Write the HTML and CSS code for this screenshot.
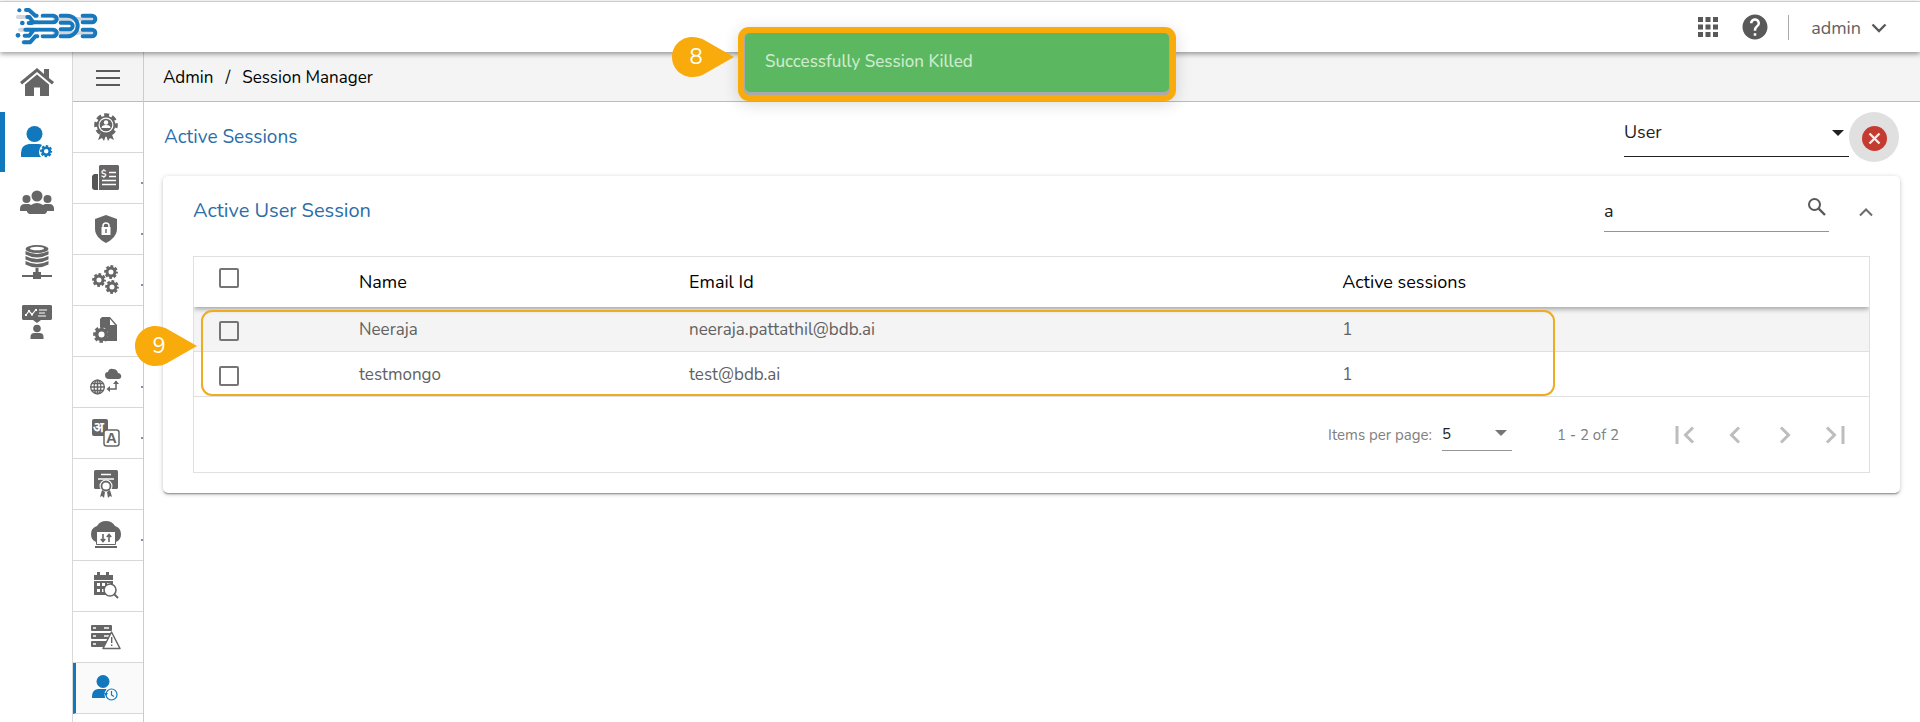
FILE: index.html
```html
<!DOCTYPE html>
<html lang="en">
<head>
    <meta charset="UTF-8">
    <meta name="viewport" content="width=device-width, initial-scale=1.0">
    <title>Session Manager</title>
    <link rel="stylesheet" href="styles.css">
</head>
<body>
    <!-- shared shapes -->
    <svg class="defs" aria-hidden="true">
        <symbol id="gear" viewBox="0 0 24 24">
            <circle cx="12" cy="12" r="6.800" fill="none" stroke="currentColor" stroke-width="5"/>
            <circle cx="12" cy="12" r="10" fill="none" stroke="currentColor" stroke-width="3.6" stroke-dasharray="4.850 3" stroke-dashoffset="2.1"/>
        </symbol>
        <symbol id="pin" viewBox="0 0 62 40">
            <path d="M20 0C9 0 0 9 0 20s9 20 20 20c5 0 9-1 14-4l28-16L34 4C29 1 25 0 20 0z" fill="#f9ab0c"/>
        </symbol>
    </svg>

    <header class="topbar">
        <a class="logo" href="#" aria-label="BDB">
            <svg width="96" height="48" viewBox="0 0 288 144" fill="none" stroke-linecap="round" stroke-linejoin="round">
                <path d="M90 48H250M90 89H250M24 42H50M30 80H60M40 118H56" stroke="#d3d6dc" stroke-width="12"/>
                <g stroke="#1778be" stroke-width="12">
                    <path d="M48 21H57L76 38H80M52 42H58L70 58H130a10 10 0 0 0 0-20H98"/>
                    <path d="M56 60H66M46 80H130a10 10 0 0 1 0 20H98M70 82L58 98H44M82 100H76L60 118H42"/>
                    <path d="M152 38H172a31 31 0 0 1 0 62H152M152 59H178a10 10 0 0 1 0 20H152"/>
                    <path d="M218 38H246a10 10 0 0 1 0 20H218M218 80H246a10 10 0 0 1 0 20H218"/>
                </g>
                <path d="M84 48H128M84 90H128M90 69H134" stroke="#fff" stroke-width="7" stroke-linecap="butt"/>
                <g fill="#1778be"><circle cx="28" cy="22" r="6"/><circle cx="37" cy="60" r="7"/><circle cx="24" cy="97" r="7"/></g>
            </svg>
        </a>
        <div class="top-actions">
            <button class="plain" aria-label="Apps">
                <svg width="20" height="20" viewBox="0 0 20 20" fill="#595959"><path d="M0 0h5v5H0zM7.500 0h5v5h-5zM15 0h5v5h-5zM0 7.500h5v5H0zM7.500 7.500h5v5h-5zM15 7.500h5v5h-5zM0 15h5v5H0zM7.500 15h5v5h-5zM15 15h5v5h-5z"/></svg>
            </button>
            <button class="plain help" aria-label="Help">
                <svg width="30" height="30" viewBox="0 0 24 24" fill="#595959"><path d="M12 2C6.480 2 2 6.480 2 12s4.480 10 10 10 10-4.480 10-10S17.520 2 12 2zm1 17h-2v-2h2v2zm2.070-7.750l-.9.920C13.450 12.900 13 13.500 13 15h-2v-.5c0-1.100.45-2.100 1.170-2.830l1.240-1.260c.37-.36.59-.86.59-1.410 0-1.100-.9-2-2-2s-2 .9-2 2H8c0-2.210 1.790-4 4-4s4 1.790 4 4c0 .88-.36 1.680-.93 2.250z"/></svg>
            </button>
            <button class="plain account">admin
                <svg width="16" height="10" viewBox="0 0 16 10" fill="none" stroke="#595959" stroke-width="2.400"><path d="M1.500 1.500L8 8l6.500-6.500"/></svg>
            </button>
        </div>
    </header>

    <div class="shell">
        <nav class="rail" aria-label="Modules">
            <a href="#" aria-label="Home"><svg width="34" height="28" viewBox="0 0 34 28" fill="#666"><path d="M17 0L0 14l2 2.500L17 4l15 12.500 2-2.500-5-4V1h-5v5z"/><path d="M17 6.500L5 16.500V28h9v-8.500h6V28h9V16.500z"/></svg></a>
            <a href="#" class="active" aria-label="Admin"><svg width="32" height="32" viewBox="0 0 32 32" fill="#1178be" color="#1178be"><circle cx="13.500" cy="8" r="8"/><path d="M0 31v-4q0-8 8-9h9q3 0 4 1-3 3-3 7 0 3 2 5z"/><use href="#gear" x="19" y="19" width="12.500" height="12.500"/></svg></a>
            <a href="#" aria-label="Groups"><svg width="34" height="24" viewBox="0 0 34 24" fill="#666"><circle cx="17" cy="6" r="5.500"/><circle cx="6.500" cy="9" r="4"/><circle cx="27.500" cy="9" r="4"/><path d="M0 21v-2q0-5 5-5h4l2 1q3-2 6-2t6 2l2-1h4q5 0 5 5v2h-7v1l-2 2H9l-2-2v-1z"/></svg></a>
            <a href="#" aria-label="Data sources"><svg width="30" height="34" viewBox="0 0 30 34" fill="#666"><ellipse cx="15" cy="4" rx="11.500" ry="4"/><ellipse cx="15" cy="3.500" rx="7" ry="1.800" fill="#fff"/><path d="M3.500 6q11.500 6 23 0v3.500q-11.500 6-23 0zM3.500 11q11.500 6 23 0v3.500q-11.500 6-23 0zM3.500 16q11.500 6 23 0v3.500q-11.500 6-23 0zM13.500 23h3v4h2.500v3h11v2H19v2h-8v-2H0v-2h11v-3h2.500z"/></svg></a>
            <a href="#" aria-label="Training"><svg width="30" height="34" viewBox="0 0 30 34" fill="#666"><path d="M1 0h28l1 1v13l-1 1H19l-4 3-4-3H1l-1-1V1z"/><path d="M4 10l3-4 3 3.500 4-5M17 5h8M17 8h6M16 11h8" fill="none" stroke="#fff" stroke-width="1.200"/><path d="M3 9h2v2H3zM6 5h2v2H6zM9 8.500h2v2H9zM13 4h2v2h-2z" fill="#fff"/><circle cx="15" cy="23.500" r="3.800"/><path d="M8.500 34v-2q0-4 4-4h5q4 0 4 4v2z"/></svg></a>
        </nav>

        <nav class="subrail" aria-label="Admin">
            <button class="plain burger" aria-label="Menu"><svg width="24" height="16" viewBox="0 0 24 16" stroke="#595959" stroke-width="2"><path d="M0 1h24M0 8h24M0 15h24"/></svg></button>
            <a href="#" aria-label="Badges"><svg width="28" height="28" viewBox="0 0 28 28" fill="#666" color="#666"><path d="M9 19h4l1 3-2 6-2-3-4 2zM19 19h-4l-1 3 2 6 2-3 4 2z"/><use href="#gear" x="2" y="0" width="24" height="24"/><circle cx="14" cy="12" r="7.500" fill="#fff"/><circle cx="14" cy="12" r="6.300"/><circle cx="14" cy="9.500" r="2.200" fill="#fff"/><path d="M9.500 15q0-3 4.500-3t4.500 3z" fill="#fff"/></svg></a>
            <a href="#" class="more" aria-label="Billing"><svg width="28" height="26" viewBox="0 0 28 26" fill="#666"><path d="M7 1l1-1h18l1 1v23l-1 1H7z"/><path d="M6 9v16H3q-3 0-3-3V11l2-2z" fill="#555"/><path d="M17 7.500h7M17 11.500h7M10 15.500h14M10 19.500h14" stroke="#fff" stroke-width="1.400"/><text x="9" y="12" class="tiny">$</text></svg></a>
            <a href="#" class="more" aria-label="Security"><svg width="24" height="28" viewBox="0 0 24 28" fill="#666"><path d="M12 0l11 4v10c0 6-5 11-11 14C6 25 1 20 1 14V4z"/><path d="M9 13v-2q0-3 3-3t3 3v2" fill="none" stroke="#fff" stroke-width="1.500"/><rect x="7.500" y="12" width="9" height="8" fill="#fff"/><path d="M11.300 14h1.400v4h-1.400z"/></svg></a>
            <a href="#" class="more" aria-label="Configurations"><svg width="28" height="30" viewBox="0 0 28 30" color="#666"><use href="#gear" x="0" y="8" width="14" height="14"/><use href="#gear" x="12" y="0" width="14" height="14"/><use href="#gear" x="13" y="15" width="14" height="14"/></svg></a>
            <a href="#" aria-label="File settings"><svg width="28" height="28" viewBox="0 0 28 28" fill="#666" color="#666"><path d="M8 2l2-2h8l7 8v16H8z"/><path d="M18 2v6h5z" fill="#fff"/><circle cx="9" cy="17" r="7" fill="#fff"/><use href="#gear" x="1" y="9" width="17" height="17"/></svg></a>
            <a href="#" class="more" aria-label="Cloud sync"><svg width="32" height="28" viewBox="0 0 32 28" fill="#666"><path d="M19 11h10q3-1 2-4-1-2-3-2-1-4-5-4-4-1-5 3-3 0-3 3 0 4 4 4z"/><g fill="none" stroke="#666" stroke-width="1.300"><circle cx="7.500" cy="19" r="6.800"/><ellipse cx="7.500" cy="19" rx="3.400" ry="6.800"/><path d="M7.500 12v14M0 19h15M1.500 15.500h12M1.500 22.500h12M26 13v8h-8" stroke-width="1.500"/></g><path d="M23 16l3-3.500 3 3.500zM20 18l-3.500 3 3.500 3z"/></svg></a>
            <a href="#" class="more" aria-label="Languages"><svg width="28" height="28" viewBox="0 0 28 28" fill="#666"><rect x="0" y="0" width="16" height="17" rx="2"/><text x="1" y="13" class="hindi">अ</text><rect x="12" y="11" width="15" height="16" rx="2.500" fill="#fff" stroke="#666" stroke-width="1.500"/><text x="14" y="24" class="letter">A</text></svg></a>
            <a href="#" aria-label="Certificates"><svg width="26" height="28" viewBox="0 0 26 28" fill="#666"><rect x="1" y="0" width="24" height="19" rx="1.500"/><path d="M8 4.500h10M5 9h16" stroke="#fff" stroke-width="1.500"/><circle cx="13" cy="16" r="6.500" fill="#fff"/><circle cx="13" cy="16" r="4.500" fill="none" stroke="#666" stroke-width="1.800"/><path d="M9 20l3 2-1 6-2-2-2 1zM17 20l-3 2 1 6 2-2 2 1z"/></svg></a>
            <a href="#" class="more" aria-label="Cloud migration"><svg width="30" height="28" viewBox="0 0 30 28" fill="#666"><path d="M5 21q-5-2-5-8 0-6 6-8Q9 0 15 0t9 5q6 2 6 8t-5 8z"/><path d="M5.500 10.500h19v13h-19z" fill="#fff" stroke="#666"/><path d="M4 25h22v2H4z"/><path d="M12 13v7M9.800 18l2.200 2.500 2.200-2.500M18 21v-7M15.800 16l2.200-2.500 2.200 2.500" fill="none" stroke="#666" stroke-width="1.600"/></svg></a>
            <a href="#" aria-label="Schedules"><svg width="26" height="28" viewBox="0 0 26 28" fill="#666"><path d="M4 0h3v3h6V0h3v3h4v5H1V3h3zM1 9h19v14H1z"/><path d="M4 11h3v3H4zM9 11h3v3H9zM14 11h3v3h-3zM4 17h3v3H4zM9 17h3v3H9z" fill="#fff"/><circle cx="17" cy="18" r="6" fill="#fff" stroke="#666" stroke-width="1.600"/><path d="M21 22l4 4" stroke="#666" stroke-width="2"/></svg></a>
            <a href="#" aria-label="Server alerts"><svg width="30" height="26" viewBox="0 0 30 26" fill="#666"><rect y="1" width="21" height="6" rx="1"/><rect y="9" width="21" height="6" rx="1"/><rect y="17" width="21" height="6" rx="1"/><path d="M2 4h3M2 12h3M2 20h3M13 4h5M13 12h5" stroke="#fff" stroke-width="1.300"/><path d="M20.500 8L29 24.500H12z" fill="#fff" stroke="#666" stroke-width="1.500" stroke-linejoin="round"/><path d="M20 13h1.400v6H20zM20 20.500h1.400V22H20z"/></svg></a>
            <a href="#" class="active" aria-label="Session Manager"><svg width="26" height="26" viewBox="0 0 26 26" fill="#1178be"><circle cx="11" cy="6.500" r="6.500"/><path d="M0 23v-2q0-6 6-7h8l1 1q-2 2-2 5v3z"/><circle cx="19.500" cy="19.500" r="7" fill="#fafafa"/><circle cx="19.500" cy="19.500" r="5.500" fill="none" stroke="#1178be" stroke-width="1.200"/><path d="M19.500 16v4l2.500 1.500" fill="none" stroke="#1178be" stroke-width="1.200"/><path d="M12 18h4l-2 3z"/></svg></a>
        </nav>

        <main class="content">
            <div class="crumbs">
                <a href="#">Admin</a><span>/</span><span>Session Manager</span>
            </div>

            <div class="page-head">
                <h1>Active Sessions</h1>
                <div class="filter">
                    <div class="select-box type-select">
                        <select aria-label="Session type"><option>User</option><option>API Client</option></select>
                    </div>
                    <button class="plain kill" aria-label="Kill sessions">
                        <svg width="25" height="25" viewBox="0 0 25 25"><circle cx="12.500" cy="12.500" r="12.500" fill="#c43c31"/><path d="M7.500 7.500l10 10M17.500 7.500l-10 10" stroke="#eee" stroke-width="2.400"/></svg>
                    </button>
                </div>
            </div>

            <section class="card">
                <div class="card-head">
                    <h2>Active User Session</h2>
                    <div class="card-tools">
                        <label class="search">
                            <input type="text" value="a" aria-label="Search">
                            <svg width="18" height="18" viewBox="0 0 18 18" fill="none" stroke="#595959" stroke-width="2"><circle cx="6.500" cy="6.500" r="5.500"/><path d="M10.700 10.700l6.300 6.300" stroke-width="2.400"/></svg>
                        </label>
                        <button class="plain collapse" aria-label="Collapse">
                            <svg width="14" height="10" viewBox="0 0 14 10" fill="none" stroke="#6b6b6b" stroke-width="2"><path d="M1 8.500l6-6 6 6"/></svg>
                        </button>
                    </div>
                </div>

                <div class="table-box">
                    <table>
                        <thead>
                            <tr><th class="check"><input type="checkbox" aria-label="Select all"></th><th class="name">Name</th><th class="email">Email Id</th><th>Active sessions</th></tr>
                        </thead>
                        <tbody>
                            <tr class="hover"><td class="check"><input type="checkbox" aria-label="Select Neeraja"></td><td>Neeraja</td><td>neeraja.pattathil@bdb.ai</td><td>1</td></tr>
                            <tr><td class="check"><input type="checkbox" aria-label="Select testmongo"></td><td>testmongo</td><td>test@bdb.ai</td><td>1</td></tr>
                        </tbody>
                    </table>
                    <div class="pager">
                        <label for="size">Items per page:</label>
                        <div class="select-box size-select">
                            <select id="size"><option>5</option><option>10</option><option>25</option></select>
                        </div>
                        <span class="range">1 - 2 of 2</span>
                        <div class="pages">
                            <button class="plain" aria-label="First page"><svg width="20" height="18" viewBox="0 0 20 18"><path d="M2 0v18M18 1.500L10.500 9l7.500 7.500"/></svg></button>
                            <button class="plain" aria-label="Previous page"><svg width="20" height="18" viewBox="0 0 20 18"><path d="M14 1.500L6.500 9l7.500 7.500"/></svg></button>
                            <button class="plain" aria-label="Next page"><svg width="20" height="18" viewBox="0 0 20 18"><path d="M6 1.500L13.500 9 6 16.500"/></svg></button>
                            <button class="plain" aria-label="Last page"><svg width="20" height="18" viewBox="0 0 20 18"><path d="M18 0v18M2 1.500L9.500 9 2 16.500"/></svg></button>
                        </div>
                    </div>
                    <div class="outline"></div>
                    <div class="callout callout-rows"><svg width="62" height="40"><use href="#pin"/></svg><span>9</span></div>
                </div>
            </section>
        </main>
    </div>

    <div class="toast" role="status">
        <p>Successfully Session Killed</p>
        <div class="callout callout-toast"><svg width="62" height="40"><use href="#pin"/></svg><span>8</span></div>
    </div>
</body>
</html>
```
FILE: styles.css
```css
* {
    box-sizing: border-box;
}
body {
    margin: 0;
    min-height: 100vh;
    background-color: #fff;
    color: #212121;
    font-family: Nunito, Lato, "Open Sans", sans-serif;
    font-size: 17px;
    overflow: hidden;
}
a {
    color: inherit;
    text-decoration: none;
}
h1, h2, p {
    margin: 0;
    font-weight: 400;
}
svg {
    display: block;
}
.defs {
    position: absolute;
    width: 0;
    height: 0;
}
.plain {
    display: flex;
    align-items: center;
    justify-content: center;
    padding: 0;
    border: 0;
    background: none;
    color: inherit;
    font: inherit;
    cursor: pointer;
}

/* top bar */
.topbar {
    position: relative;
    z-index: 2;
    display: flex;
    justify-content: space-between;
    align-items: center;
    height: 51px;
    margin-top: 1px;
    padding: 0 33px 0 10px;
    border-top: 1px solid #ccc;
    background-color: #fff;
    box-shadow: 0 2px 5px rgba(0, 0, 0, 0.4);
}
.top-actions {
    display: flex;
    align-items: center;
    color: #616161;
}
.help {
    margin: 0 18px 0 22px;
}
.account {
    gap: 10px;
    height: 25px;
    padding-left: 22px;
    padding-top: 2px;
    border-left: 1px solid #aaa;
    font-size: 18px;
}

/* side navigation */
.shell {
    display: flex;
    align-items: stretch;
}
.rail {
    flex: none;
    width: 73px;
    border-right: 1px solid #d8d8d8;
}
.rail a {
    display: flex;
    align-items: center;
    justify-content: center;
    height: 60px;
    border-left: 5px solid transparent;
    padding-right: 3px;
}
.rail a.active {
    border-left-color: #1178be;
}
.subrail {
    flex: none;
    width: 71px;
    min-height: 670px;
    border-right: 1px solid #ccc;
}
.subrail a, .burger {
    display: flex;
    align-items: center;
    justify-content: center;
    width: 100%;
    height: 51px;
    padding-right: 4px;
    border-bottom: 1px solid #d8d8d8;
}
.subrail .burger {
    height: 50px;
    padding-top: 2px;
    padding-right: 0;
    border-bottom: 1px solid #bbb;
    background-color: #f4f4f4;
}
.subrail .more {
    position: relative;
}
.more::after {
    content: "";
    position: absolute;
    right: 0;
    bottom: 19px;
    width: 2px;
    height: 2px;
    background-color: #8a8aa8;
}
.subrail a.active {
    border-left: 3px solid #1178be;
    padding-right: 9px;
    background-color: #fafafa;
}
.tiny {
    font-size: 9px;
    font-weight: 700;
    fill: #fff;
}
.hindi {
    font-size: 14px;
    font-weight: 700;
    fill: #fff;
}
.letter {
    font-family: "Liberation Sans", sans-serif;
    font-size: 15px;
    font-weight: 700;
}

/* content */
.content {
    flex: 1;
    min-width: 0;
}
.crumbs {
    display: flex;
    align-items: center;
    gap: 12px;
    height: 50px;
    padding: 2px 0 0 19px;
    border-bottom: 1px solid #bbb;
    background-color: #f4f4f4;
    color: #000;
}
.page-head {
    display: flex;
    justify-content: space-between;
    align-items: center;
    height: 74px;
    padding: 0 21px 4px 20px;
}
h1, h2 {
    color: #2b6da8;
    font-size: 19px;
}
h2 {
    font-size: 20px;
}
.filter {
    display: flex;
}
.select-box {
    position: relative;
    border-bottom: 1px solid #212121;
}
.select-box::after {
    content: "";
    position: absolute;
    right: 5px;
    top: 50%;
    margin-top: -4px;
    border: 6px solid transparent;
    border-top-color: currentColor;
    border-bottom: 0;
    pointer-events: none;
}
.select-box select {
    width: 100%;
    height: 100%;
    padding: 0;
    border: 0;
    outline: 0;
    background: none;
    color: #212121;
    font: inherit;
    appearance: none;
}
.type-select {
    width: 225px;
    height: 45px;
    font-size: 18px;
}
.type-select select {
    padding-bottom: 4px;
}
.kill {
    width: 50px;
    height: 50px;
    padding-top: 2px;
    border-radius: 50%;
    background-color: #e0e0e0;
}

.card {
    margin: 0 20px 0 19px;
    padding: 0 30px 20px;
    border-radius: 5px;
    box-shadow: 0 2px 2px -1px rgba(0, 0, 0, 0.4), 0 1px 5px rgba(0, 0, 0, 0.2);
}
.card-head {
    display: flex;
    justify-content: space-between;
    height: 80px;
    padding-top: 20px;
}
.card-head h2 {
    line-height: 30px;
}
.card-tools {
    display: flex;
    gap: 30px;
    height: 36px;
    margin-right: -3px;
}
.search {
    display: flex;
    width: 225px;
    padding: 2px 3px 0 0;
    border-bottom: 1px solid #949494;
}
.search input {
    flex: 1;
    min-width: 0;
    height: 26px;
    padding: 0;
    border: 0;
    outline: 0;
    background: none;
    color: #212121;
    font: inherit;
    font-size: 18px;
}
.collapse {
    padding-bottom: 4px;
}

.table-box {
    position: relative;
    border: 1px solid #e0e0e0;
}
table {
    width: 100%;
    border-collapse: separate;
    border-spacing: 0;
    table-layout: fixed;
}
thead {
    position: relative;
    background-color: #fff;
    box-shadow: 0 2px 5px rgba(0, 0, 0, 0.35);
    clip-path: inset(0 0 -8px 0);
}
th, td {
    padding: 0;
    text-align: left;
    font-weight: 400;
}
th {
    height: 50px;
    color: #000;
    font-size: 18px;
}
td {
    height: 45px;
    padding-top: 1px;
    border-bottom: 1px solid #e0e0e0;
    color: #616161;
    font-size: 17px;
}
th.check {
    width: 165px;
}
.check {
    padding-left: 25px;
}
td.check {
    padding-top: 3px;
}
.name {
    width: 330px;
}
.email {
    width: 39%;
}
.hover {
    background-color: #f4f4f4;
}
input[type="checkbox"] {
    display: block;
    width: 20px;
    height: 20px;
    margin: 0;
    border: 2px solid #757575;
    border-radius: 2px;
    appearance: none;
}
th input[type="checkbox"] {
    margin-bottom: 8px;
}

.pager {
    display: flex;
    align-items: center;
    justify-content: flex-end;
    height: 75px;
    padding-right: 24px;
    color: #808080;
    font-size: 15px;
}
.size-select {
    width: 70px;
    height: 33px;
    margin: 0 45px 0 10px;
    border-bottom-color: #949494;
    color: #757575;
}
.pages {
    display: flex;
    gap: 30px;
    margin-left: 56px;
}
.pages svg {
    fill: none;
    stroke: #bdbdbd;
    stroke-width: 3;
}

/* notification and step markers */
.toast {
    position: absolute;
    z-index: 3;
    top: 27px;
    left: 50%;
    width: 438px;
    height: 74px;
    margin-left: -222px;
    padding: 0 1px 2px;
    border: 6px solid #f9ab0c;
    border-radius: 11px;
    background-color: #aaa;
    box-shadow: 0 3px 16px rgba(0, 0, 0, 0.15);
}
.toast p {
    height: 59px;
    padding-left: 20px;
    border-radius: 5px;
    background-color: #5cb860;
    color: #cdebce;
    font-size: 17px;
    font-weight: 500;
    line-height: 58px;
}
.outline {
    position: absolute;
    top: 53px;
    left: 7px;
    right: 314px;
    height: 86px;
    border: 2px solid #eeac22;
    border-radius: 11px;
    pointer-events: none;
}
.callout {
    position: absolute;
}
.callout span {
    position: absolute;
    top: 0;
    left: 0;
    width: 48px;
    color: #fff;
    font-size: 22px;
    line-height: 41px;
    text-align: center;
}
.callout-toast {
    top: 4px;
    left: -72px;
}
.callout-rows {
    top: 69px;
    left: -59px;
}
```
